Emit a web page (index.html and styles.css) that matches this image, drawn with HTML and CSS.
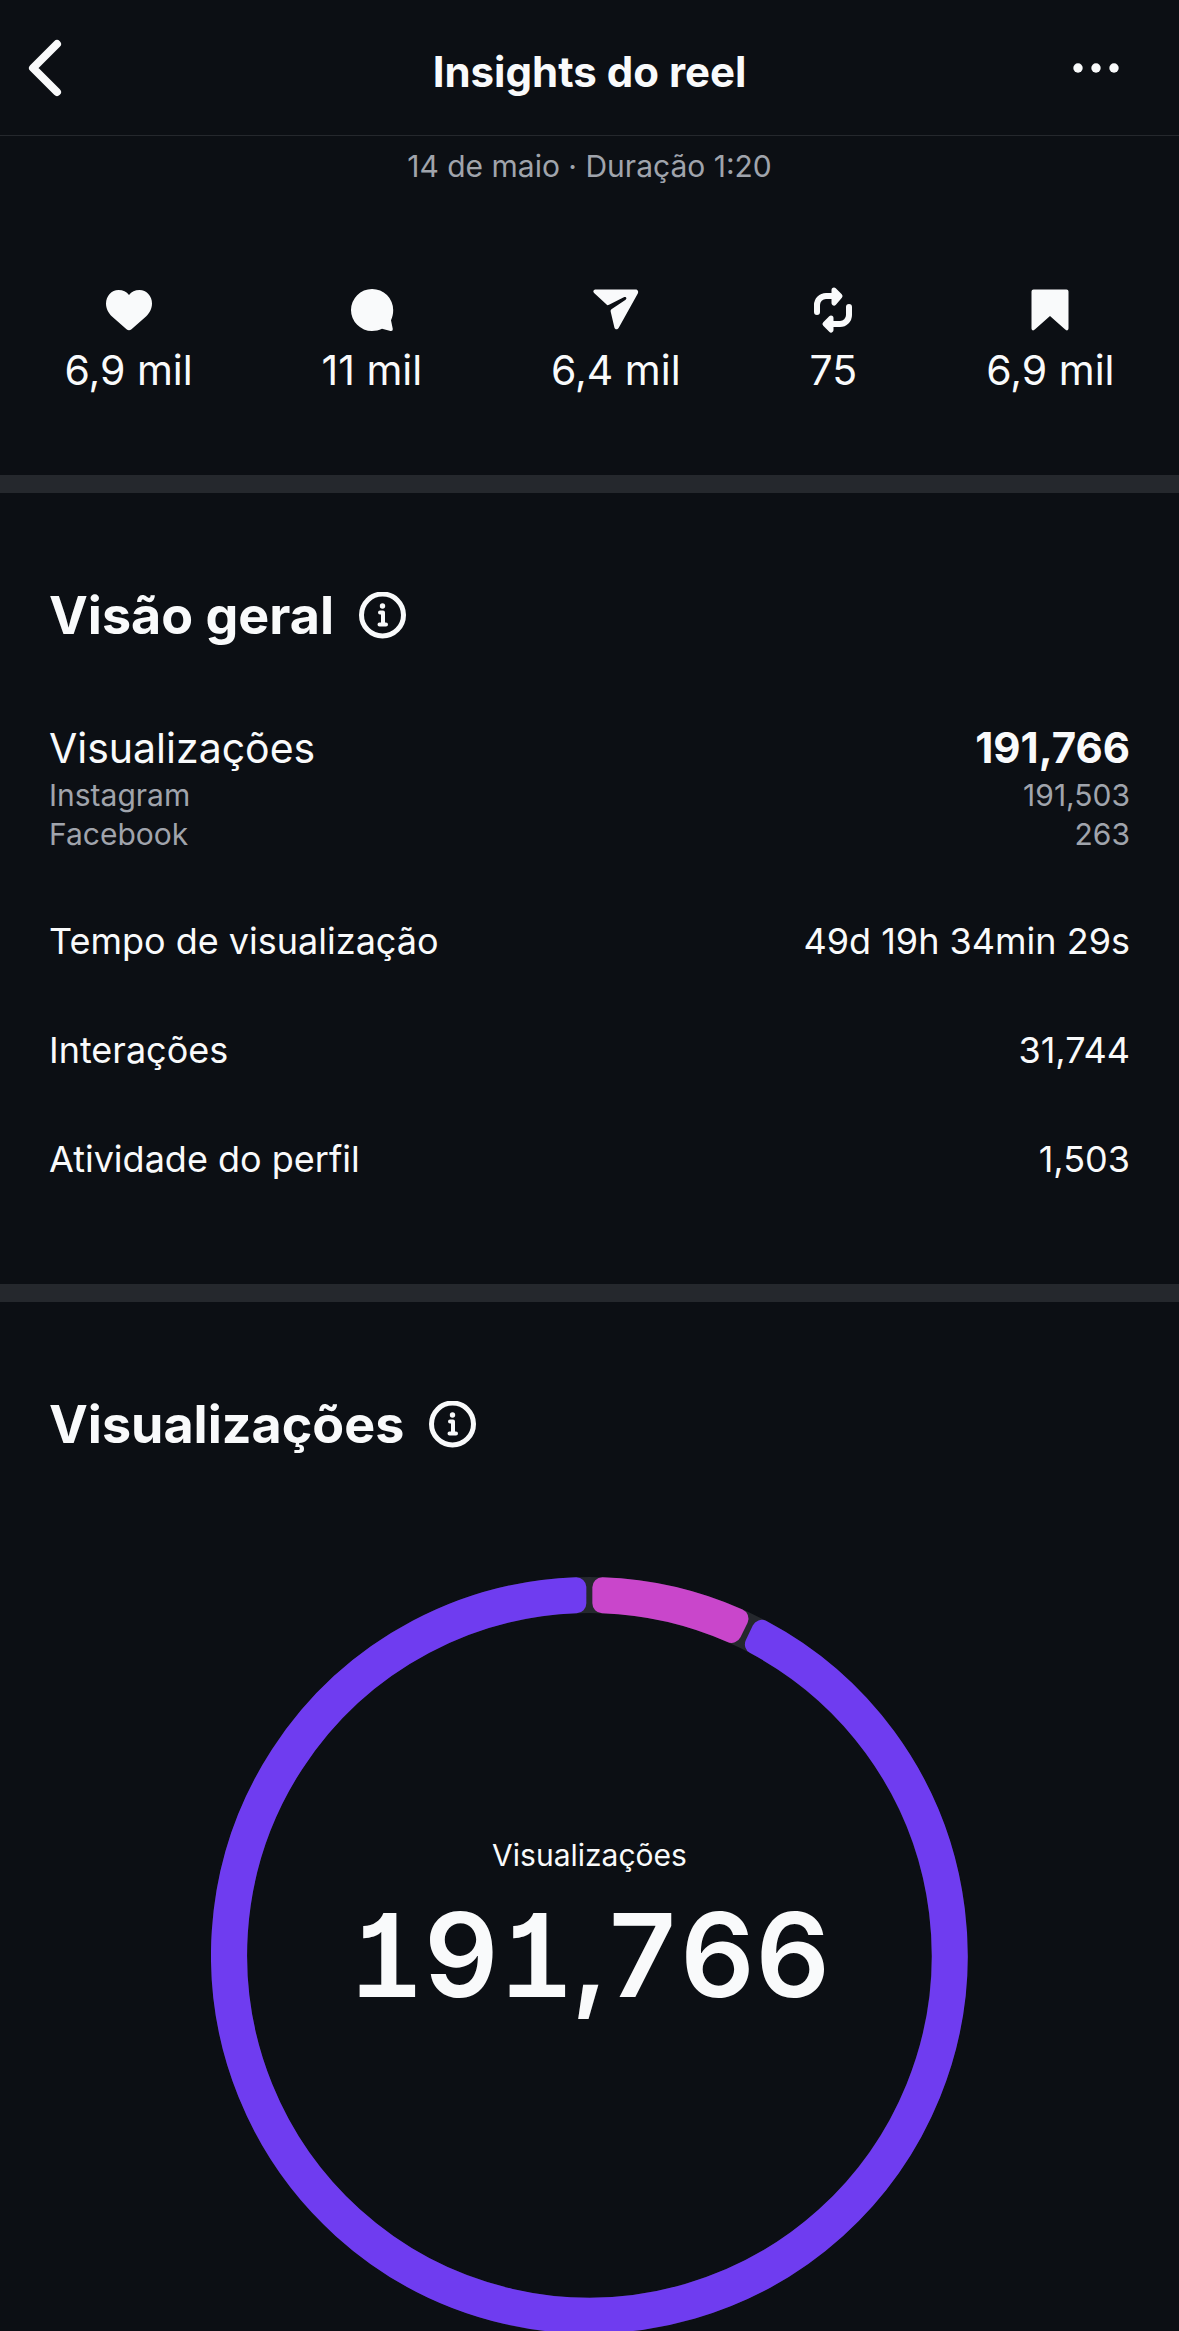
FILE: index.html
```html
<!DOCTYPE html>
<html lang="pt-BR">

<head>
  <meta charset="UTF-8">
  <meta name="viewport" content="width=device-width, initial-scale=1.0">
  <title>Insights do reel</title>
  <link rel="stylesheet" href="styles.css">
</head>

<body>
  <header class="topbar">
    <button class="icon-button back" aria-label="Voltar">
      <svg width="34" height="58" viewBox="0 0 34 58">
        <path d="M29 5 5 29l24 24" fill="none" stroke="currentColor" stroke-width="8" stroke-linecap="round" stroke-linejoin="round" />
      </svg>
    </button>
    <h1>Insights do reel</h1>
    <button class="icon-button more" aria-label="Mais opções">
      <svg width="46" height="10" viewBox="0 0 46 10" fill="currentColor">
        <circle cx="5" cy="5" r="4.700" />
        <circle cx="23" cy="5" r="4.700" />
        <circle cx="41" cy="5" r="4.700" />
      </svg>
    </button>
  </header>

  <main>
    <section class="summary">
      <p class="meta">14 de maio · Duração 1:20</p>
      <ul class="stats">
        <li>
          <svg width="48" height="48" viewBox="0 0 48 48" fill="currentColor" role="img" aria-label="Curtidas">
            <path d="M13.500 4C6.500 4 1 10 1 17.500c0 5.500 2.500 9.500 6 13L21.500 43.300q2.500 2 5 0L41 30.500c3.500-3.500 6-7.500 6-13C47 10 41.500 4 34.500 4 30 4 26.500 5.800 24 9 21.500 5.800 18 4 13.500 4z" />
          </svg>
          <span>6,9 mil</span>
        </li>
        <li>
          <svg width="48" height="48" viewBox="0 0 48 48" fill="currentColor" role="img" aria-label="Comentários">
            <path d="M24 3a21 21 0 1 0 0 42c3.500 0 7-.8 10-2.200l8.500 2.100q2.500.4 2.300-2L43 34.200c1.500-3.200 2.200-6.500 2.200-10.200A21 21 0 0 0 24 3z" />
          </svg>
          <span>11 mil</span>
        </li>
        <li>
          <svg width="48" height="48" viewBox="0 0 48 48" fill="currentColor" role="img" aria-label="Envios">
            <path d="M4 3.500h39.500c2.200 0 3.300 2 2.300 4L26.600 42c-1.200 2-3.700 1.700-4.200-.5L18.700 25.800c-.3-1.300.1-2 1.100-2.700L33.300 14c2.200-1.600.8-4-1.500-2.800L17 18.800c-1.200.6-1.900.4-2.700-.6L2.100 7C.6 5.300 1.600 3.500 4 3.500z" />
          </svg>
          <span>6,4 mil</span>
        </li>
        <li>
          <svg width="48" height="48" viewBox="0 0 48 48" fill="none" stroke="currentColor" stroke-width="6" stroke-linecap="round" stroke-linejoin="round" role="img" aria-label="Reposts">
            <path d="M8 26v-7a9 9 0 0 1 9-9H27M40 21v8a9 9 0 0 1-9 9H21" />
            <path d="M25 4l6 6-6 7zM22 32l-6 6 6 6z" fill="currentColor" stroke-width="5" />
          </svg>
          <span>75</span>
        </li>
        <li>
          <svg width="48" height="48" viewBox="0 0 48 48" fill="currentColor" role="img" aria-label="Salvamentos">
            <path d="M7.500 3.500h33q2 0 2 2v36.800c0 2.300-2 2.700-3.300 1.300L24 30 8.800 43.600c-1.300 1.400-3.300 1-3.300-1.300V5.500q0-2 2-2z" />
          </svg>
          <span>6,9 mil</span>
        </li>
      </ul>
    </section>

    <section class="panel">
      <div class="heading">
        <h2>Visão geral</h2>
        <button class="icon-button" aria-label="Sobre a visão geral">
          <svg width="48" height="48" viewBox="0 0 48 48" fill="none" stroke="currentColor" stroke-width="4" stroke-linecap="round" stroke-linejoin="round">
            <circle cx="23.500" cy="23" r="21" stroke-width="5" />
            <path d="M21 20.500h3v11M20.500 32.500h6.500" />
            <circle cx="23.500" cy="14" r="2.700" fill="currentColor" stroke="none" />
          </svg>
        </button>
      </div>
      <dl class="metrics">
        <div class="row total">
          <dt>Visualizações</dt>
          <dd>191,766</dd>
        </div>
        <div class="row source">
          <dt>Instagram</dt>
          <dd>191,503</dd>
        </div>
        <div class="row source">
          <dt>Facebook</dt>
          <dd>263</dd>
        </div>
        <div class="row metric">
          <dt>Tempo de visualização</dt>
          <dd>49d 19h 34min 29s</dd>
        </div>
        <div class="row metric">
          <dt>Interações</dt>
          <dd>31,744</dd>
        </div>
        <div class="row metric">
          <dt>Atividade do perfil</dt>
          <dd>1,503</dd>
        </div>
      </dl>
    </section>

    <section class="panel">
      <div class="heading">
        <h2>Visualizações</h2>
        <button class="icon-button" aria-label="Sobre as visualizações">
          <svg width="48" height="48" viewBox="0 0 48 48" fill="none" stroke="currentColor" stroke-width="4" stroke-linecap="round" stroke-linejoin="round">
            <circle cx="23.500" cy="23" r="21" stroke-width="5" />
            <path d="M21 20.500h3v11M20.500 32.500h6.500" />
            <circle cx="23.500" cy="14" r="2.700" fill="currentColor" stroke="none" />
          </svg>
        </button>
      </div>
      <div class="chart">
        <svg class="ring" viewBox="-378 -378 756 756" aria-hidden="true">
          <circle class="track" r="360" />
          <path class="segment primary" d="M172.300-325.200A368 368 0 1 1-13-367.800V-351.800A352 352 0 1 0 165.400-310.800z" />
          <path class="segment secondary" d="M13-367.800A368 368 0 0 1 149-336.500L142-322.200A352 352 0 0 0 13-351.800z" />
        </svg>
        <div class="chart-label">
          <span class="caption">Visualizações</span>
          <strong>191,766</strong>
        </div>
      </div>
    </section>
  </main>
</body>

</html>
```

FILE: styles.css
```css
:root {
  --bg: #0c0f14;
  --line: #25282d;
  --text: #f9fafb;
  --muted: #a0a4ac;
  --purple: #6f3cf0;
  --pink: #c946cb;
}

* {
  box-sizing: border-box;
}

body {
  background: var(--bg);
  color: var(--text);
  font-family: Inter, "Liberation Sans", sans-serif;
  font-size: 36px;
  margin: 0;
}

h1,
h2,
p,
ul,
dl,
dd {
  margin: 0;
  padding: 0;
}

svg {
  display: block;
}

.icon-button {
  background: none;
  border: none;
  color: inherit;
  padding: 0;
}

.topbar {
  align-items: center;
  border-bottom: 1px solid var(--line);
  display: grid;
  grid-template-columns: 1fr auto 1fr;
  height: 136px;
  padding: 0 28px;

  h1 {
    font-size: 42px;
    font-weight: 700;
    line-height: 48px;
    padding-top: 8px;
  }

  .back {
    justify-self: start;
  }

  .more {
    justify-self: end;
    margin-right: 32px;
  }
}

.summary {
  padding: 10px 0 77px;
}

.meta {
  color: var(--muted);
  font-size: 30px;
  line-height: 40px;
  text-align: center;
}

.stats {
  display: flex;
  justify-content: space-around;
  list-style: none;
  padding-top: 100px;

  li {
    align-items: center;
    display: flex;
    flex-direction: column;
    font-size: 41px;
    gap: 8px;
    line-height: 56px;
  }
}

.panel {
  border-top: 18px solid var(--line);
  padding: 95px 49px 0;
}

.heading {
  align-items: center;
  display: flex;
  gap: 25px;

  h2 {
    font-size: 52px;
    font-weight: 700;
    line-height: 56px;
  }
}

.metrics {
  padding: 76px 0 103px;
}

.row {
  display: flex;
  justify-content: space-between;
}

.total {
  font-size: 41px;
  line-height: 56px;

  dd {
    font-size: 42px;
    font-weight: 700;
  }
}

.source {
  color: var(--muted);
  font-size: 30px;
  line-height: 39px;
}

.metric {
  line-height: 44px;
  padding-top: 65px;
}

.chart {
  display: grid;
  margin: 124px auto 0;
  place-items: center;
  width: 70%;

  > * {
    grid-area: 1 / 1;
  }
}

.ring {
  width: 100%;
}

.track {
  fill: none;
  stroke: var(--line);
  stroke-width: 36;
}

/* the stroke gives each segment its rounded corners */
.segment {
  stroke-linejoin: round;
  stroke-width: 20;
}

.primary {
  fill: var(--purple);
  stroke: var(--purple);
}

.secondary {
  fill: var(--pink);
  stroke: var(--pink);
}

.chart-label {
  align-items: center;
  display: flex;
  flex-direction: column;
  padding-bottom: 40px;

  .caption {
    font-size: 30px;
    line-height: 40px;
  }

  strong {
    font-feature-settings: "tnum", "cv01";
    font-size: 116px;
    font-weight: 600;
    line-height: 160px;
  }
}
```
